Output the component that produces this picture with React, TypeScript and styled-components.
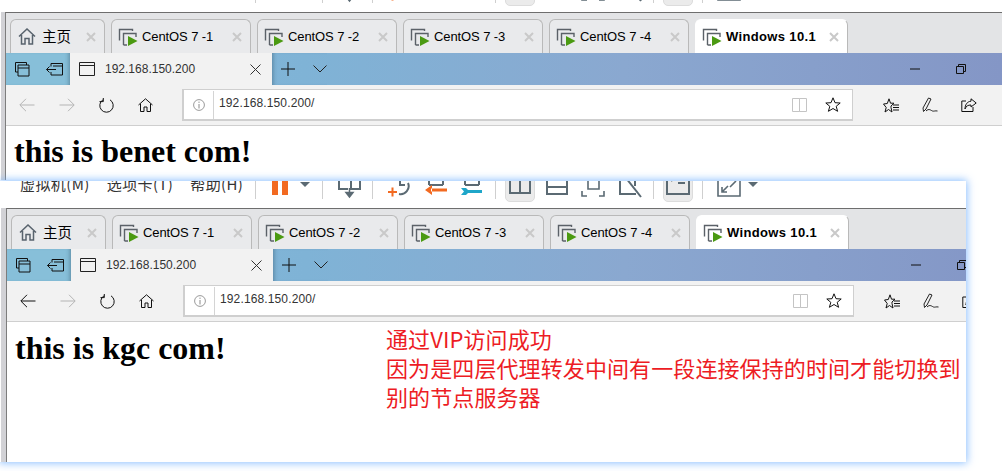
import React from "react";
import styled, { createGlobalStyle } from "styled-components";

const Global = createGlobalStyle`
  html, body { margin: 0; padding: 0; background: #fff; overflow: hidden; }
  body { width: 1002px; height: 471px; font-family: "Liberation Sans", "Noto Sans CJK SC", sans-serif; }
`;

const Page = styled.div`
  width: 1002px;
  height: 471px;
  overflow: hidden;
  display: flex;
  flex-direction: column;
`;

const Shot = styled.section<{ $width: number; $glow?: boolean }>`
  position: relative;
  z-index: ${(p) => (p.$glow ? 1 : 0)};
  width: ${(p) => p.$width}px;
  flex: none;
  background: #fff;
  box-shadow: ${(p) => (p.$glow ? "0 0 8px 1px rgba(110,175,255,.8)" : "none")};
  ${(p) => (p.$glow ? "margin-top: 1px;" : "")}
`;

const Clip = styled.div`
  overflow: hidden;
`;

const VmToolbar = styled.div<{ $height: number }>`
  height: ${(p) => p.$height}px;
  padding-left: 20px;
  display: flex;
  align-items: flex-end;
  overflow: hidden;
  background: #fff;
`;

const MenuGroup = styled.div`
  flex: none;
  width: 221px;
  display: flex;
  gap: 17px;
  align-items: flex-end;
`;

const Menu = styled.span`
  flex: none;
  margin-bottom: 14px;
  font: 15px/20px "Noto Sans CJK SC", sans-serif;
  letter-spacing: 0.4px;
  color: #333;
  white-space: nowrap;
`;

const Sep = styled.span<{ $ml: number }>`
  flex: none;
  width: 1px;
  height: 20px;
  margin-left: ${(p) => p.$ml}px;
  margin-bottom: 9px;
  background: #cfcfcf;
`;

const ToolIcon = styled.svg<{ $ml: number; $mb?: number }>`
  flex: none;
  display: block;
  margin-left: ${(p) => p.$ml}px;
  margin-bottom: ${(p) => p.$mb ?? 0}px;
`;

const ToolButton = styled.span<{ $ml: number }>`
  flex: none;
  box-sizing: border-box;
  width: 30px;
  height: 40px;
  margin-left: ${(p) => p.$ml}px;
  margin-bottom: 6px;
  background: #ebebeb;
  border: 1px solid #dcdcdc;
  border-radius: 0 0 5px 5px;
  display: flex;
  justify-content: center;
  align-items: flex-end;
`;

const Framed = styled.div<{ $gutter: number }>`
  display: flex;
  background: linear-gradient(90deg, #fff 1px, #d2d2d6 1px);
  padding-left: ${(p) => p.$gutter}px;
`;

const Inner = styled.div`
  width: 997px;
  flex: none;
  box-sizing: border-box;
  border-left: 1px solid #7d7d7d;
  border-top: 1px solid #6e6e6e;
  background: #fff;
`;

const TabStrip = styled.div`
  height: 40px;
  box-sizing: border-box;
  background: #e3e4e6;
  padding: 6px 0 0 4px;
  display: flex;
  gap: 6px;
`;

const VmTab = styled.div<{ $width: number; $active?: boolean }>`
  width: ${(p) => p.$width}px;
  height: 34px;
  box-sizing: border-box;
  padding: 0 8px 0 6px;
  display: flex;
  align-items: center;
  background: ${(p) => (p.$active ? "#fff" : "#e9eaec")};
  border: 1px solid ${(p) => (p.$active ? "#fff" : "#b9b9b9")};
  border-right-color: #b9b9b9;
  border-bottom: 0;
  border-radius: 6px 6px 0 0;
  flex: none;
`;

const TabLabel = styled.span<{ $active?: boolean; $cjk?: boolean }>`
  margin-left: ${(p) => (p.$cjk ? 6 : 4)}px;
  flex: 1;
  white-space: nowrap;
  color: #000;
  font: ${(p) => (p.$active ? "bold 13px" : "13px")} / 16px "Liberation Sans", "Noto Sans CJK SC", sans-serif;
  font-size: ${(p) => (p.$cjk ? "14.5px" : "13px")};
  letter-spacing: ${(p) => (p.$active ? "0.35px" : p.$cjk ? "0" : "-0.1px")};
`;

const BrowserBar = styled.div`
  height: 32px;
  display: flex;
  align-items: stretch;
  background: linear-gradient(90deg, #85bbd9 0%, #7fb3d6 30%, #8aa8d0 62%, #8496c6 100%);
`;

const SetTabs = styled.div`
  width: 64px;
  flex: none;
  display: flex;
  align-items: center;
  gap: 16px;
  padding-left: 9px;
  box-sizing: border-box;
  background: #87bfd9;
  box-shadow: inset -4px 0 4px -3px rgba(40, 70, 90, 0.45);
`;

const PageTab = styled.div`
  width: 202px;
  flex: none;
  box-sizing: border-box;
  display: flex;
  align-items: center;
  padding: 0 11px 0 9px;
  background: #f2f2f2;
`;

const PageTitle = styled.span`
  flex: 1;
  margin-left: 10px;
  font-size: 12px;
  color: #333;
  white-space: nowrap;
`;

const BarButtons = styled.div`
  flex: none;
  display: flex;
  align-items: center;
  gap: 18px;
  padding-left: 9px;
  box-shadow: inset 4px 0 4px -3px rgba(40, 70, 90, 0.45);
`;

const WindowButtons = styled.div`
  margin-left: auto;
  display: flex;
  align-items: center;
  gap: 36px;
  padding-right: 36px;
`;

const NavBar = styled.div`
  height: 41px;
  box-sizing: border-box;
  display: flex;
  align-items: center;
  background: #f2f2f2;
  border-bottom: 1px solid #cfcfcf;
  padding-left: 13px;
`;

const NavIcons = styled.div`
  display: flex;
  align-items: center;
  gap: 24px;
  flex: none;
  width: 163px;
`;

const Address = styled.div`
  width: 671px;
  height: 32px;
  box-sizing: border-box;
  flex: none;
  background: #fff;
  border: 1px solid #cfcfcf;
  border-bottom-width: 2px;
  border-left-width: 2px;
  display: flex;
  align-items: center;
  padding: 0 11px 0 9px;
`;

const AddressDivider = styled.span`
  width: 1px;
  height: 28px;
  background: #d4d4d4;
  margin: 0 5px 0 8px;
`;

const Url = styled.span`
  flex: 1;
  font-size: 12px;
  letter-spacing: 0.13px;
  color: #333;
  margin-top: -4px;
  white-space: nowrap;
`;

const AddressIcons = styled.div`
  display: flex;
  align-items: center;
  gap: 18px;
`;

const HubIcons = styled.div`
  display: flex;
  align-items: center;
  gap: 23px;
  margin-left: 30px;
  flex: none;
`;

const Content = styled.div<{ $height: number }>`
  height: ${(p) => p.$height}px;
  box-sizing: border-box;
  padding-left: 8px;
  display: grid;
  grid-template-columns: 371px 1fr;
  background: #fff;
`;

const Heading = styled.h1<{ $top: number }>`
  margin: ${(p) => p.$top}px 0 0;
  font: bold 32px/37px "Liberation Serif", "Times New Roman", serif;
  color: #000;
  white-space: nowrap;
`;

const Annotation = styled.p`
  margin: 2px 0 0;
  font: 22px/29px "Noto Sans CJK SC", "Liberation Sans", sans-serif;
  letter-spacing: 0.1px;
  color: #ed1c24;
  width: 585px;
`;

const s = { fill: "none", stroke: "#111", strokeWidth: 1 };

const VmIcon = () => (
  <svg width="20" height="18" viewBox="0 0 20 18" style={{ flex: "none" }}>
    <path d="M1.5 12.5V1.5H14.5V3" fill="none" stroke="#5b6168" strokeWidth="1.4" />
    <path d="M5.5 17V5.5H18V9M5.5 17H9" fill="none" stroke="#5b6168" strokeWidth="1.4" />
    <path d="M10 8L19.5 13L10 18Z" fill="#4b9a12" />
  </svg>
);

const HomeTabIcon = () => (
  <svg width="18" height="17" viewBox="0 0 18 17" style={{ flex: "none", marginLeft: 1 }}>
    <path d="M1 8.5L9 1L17 8.5M3.5 7V16H7V10.5H11V16H14.5V7" fill="none" stroke="#58636d" strokeWidth="1.5" />
  </svg>
);

const Close = () => (
  <svg width="10" height="10" viewBox="0 0 10 10" style={{ flex: "none" }}>
    <path d="M1 1L9 9M9 1L1 9" stroke="#c9c9c9" strokeWidth="2" />
  </svg>
);

const Tabs = () => (
  <TabStrip>
    <VmTab $width={95}>
      <HomeTabIcon />
      <TabLabel $cjk>主页</TabLabel>
      <Close />
    </VmTab>
    {["CentOS 7 -1", "CentOS 7 -2", "CentOS 7 -3", "CentOS 7 -4"].map((t) => (
      <VmTab key={t} $width={140}>
        <VmIcon />
        <TabLabel>{t}</TabLabel>
        <Close />
      </VmTab>
    ))}
    <VmTab $width={153} $active>
      <VmIcon />
      <TabLabel $active>Windows 10.1</TabLabel>
      <Close />
    </VmTab>
  </TabStrip>
);

const Browser = ({ canGoBack }: { canGoBack?: boolean }) => (
  <>
    <BrowserBar>
      <SetTabs>
        <svg width="15" height="15" viewBox="0 0 15 15">
          <path d="M.5.5H11.5V3M.5.5V10H3" {...s} />
          <path d="M3 3H14V14H3ZM3 6H14" fill="none" stroke="#111" />
        </svg>
        <svg width="17" height="13" viewBox="0 0 17 13">
          <path d="M5 .5H16.5V12H5V9M5 3.5V.5M7 3H16.5" {...s} />
          <path d="M.5 6.5H10M3.5 3.5L.5 6.5L3.5 9.5" {...s} />
        </svg>
      </SetTabs>
      <PageTab>
        <svg width="16" height="14" viewBox="0 0 16 14">
          <path d="M.5.5H15.5V13.5H.5ZM.5 3.5H15.5" fill="none" stroke="#222" />
        </svg>
        <PageTitle>192.168.150.200</PageTitle>
        <svg width="11" height="11" viewBox="0 0 11 11">
          <path d="M.5.5L10.5 10.5M10.5.5L.5 10.5" stroke="#333" />
        </svg>
      </PageTab>
      <BarButtons>
        <svg width="14" height="14" viewBox="0 0 14 14">
          <path d="M7 0V14M0 7H14" stroke="#111" />
        </svg>
        <svg width="14" height="8" viewBox="0 0 14 8">
          <path d="M.5.5L7 7L13.5.5" fill="none" stroke="#222" />
        </svg>
      </BarButtons>
      <WindowButtons>
        <svg width="10" height="2" viewBox="0 0 10 2">
          <path d="M0 1H10" stroke="#111" />
        </svg>
        <svg width="10" height="10" viewBox="0 0 10 10">
          <path d="M.5 2.5H7.5V9.5H.5ZM2.5 2.5V.5H9.5V7.5H7.5" fill="none" stroke="#111" />
        </svg>
      </WindowButtons>
    </BrowserBar>
    <NavBar>
      <NavIcons>
        <svg width="16" height="14" viewBox="0 0 16 14">
          <path d="M15.5 7H1M7 .8L.8 7L7 13.2" fill="none" stroke={canGoBack ? "#111" : "#b4b4b4"} />
        </svg>
        <svg width="16" height="14" viewBox="0 0 16 14">
          <path d="M.5 7H15M9 .8L15.2 7L9 13.2" fill="none" stroke="#b4b4b4" />
        </svg>
        <svg width="15" height="15" viewBox="0 0 15 15">
          <path d="M4 1.8A6.7 6.7 0 1 0 11 1.8" fill="none" stroke="#111" />
          <path d="M4.3 0V4H.5" fill="none" stroke="#111" transform="translate(0 -.4)" />
        </svg>
        <svg width="15" height="14" viewBox="0 0 15 14">
          <path d="M.5 7L7.5 .8L14.5 7M2.5 5.8V13.5H6V9H9V13.5H12.5V5.8" fill="none" stroke="#111" />
        </svg>
      </NavIcons>
      <Address>
        <svg width="12" height="12" viewBox="0 0 12 12" style={{ flex: "none" }}>
          <circle cx="6" cy="6" r="5.4" fill="none" stroke="#9a9a9a" />
          <path d="M6 5V9.5M6 2.6V3.9" stroke="#8a8a8a" />
        </svg>
        <AddressDivider />
        <Url>192.168.150.200/</Url>
        <AddressIcons>
          <svg width="15" height="14" viewBox="0 0 15 14">
            <path d="M.5.5H7.5V13.5H.5ZM7.5.5H14.5V13.5H7.5Z" fill="none" stroke="#c4c4c4" />
          </svg>
          <svg width="16" height="15" viewBox="0 0 16 15">
            <path d="M8 .8L10 5.7L15.2 6L11.2 9.3L12.6 14.3L8 11.5L3.4 14.3L4.8 9.3L.8 6L6 5.7Z" fill="none" stroke="#111" />
          </svg>
        </AddressIcons>
      </Address>
      <HubIcons>
        <svg width="16" height="15" viewBox="0 0 16 15">
          <path d="M6 .8L7.5 5.2H11L8 8V9.5L9 14L5.5 11.5L2 14L3.2 9.5L.5 6L4.3 5.5Z" fill="none" stroke="#111" />
          <path d="M10 7H16M10 9.5H16M10 12H16" stroke="#111" />
        </svg>
        <svg width="16" height="16" viewBox="0 0 16 16">
          <path d="M1.5 14.5L1 11L6.5 1L9 2L4 12ZM4 14C7 11 9 13.5 10.5 14C12 14.5 13 13.5 15.5 14" fill="none" stroke="#222" />
        </svg>
        <svg width="16" height="15" viewBox="0 0 16 15">
          <path d="M5 3H.8V13.5H12V9" fill="none" stroke="#111" />
          <path d="M10 .8L15.2 5L10 9V7C7 7 5 8 4 11C4 7 6 3.5 10 3.2Z" fill="none" stroke="#111" />
        </svg>
      </HubIcons>
    </NavBar>
  </>
);

const Chrome = ({ height, menus }: { height: number; menus?: boolean }) => {
  const g = "#5b6a73";
  return (
    <VmToolbar $height={height}>
      <MenuGroup>
        {menus && (
          <>
            <Menu>虚拟机(M)</Menu>
            <Menu>选项卡(T)</Menu>
            <Menu>帮助(H)</Menu>
          </>
        )}
      </MenuGroup>
      <Sep $ml={14} />
      <ToolIcon $ml={16} width="16" height="40" viewBox="0 0 16 40">
        <path d="M0 10H6V27H0ZM10 10H16V27H10Z" fill="#f26a21" />
      </ToolIcon>
      <ToolIcon $ml={12} width="10" height="40" viewBox="0 0 10 40">
        <path d="M0 14H10L5 19Z" fill={g} />
      </ToolIcon>
      <Sep $ml={12} />
      <ToolIcon $ml={15} width="23" height="40" viewBox="0 0 23 40">
        <path d="M1 10V21H10M13 10V21H22V10" fill="none" stroke={g} strokeWidth="2" />
        <path d="M11.5 20V26M8 24.5L11.5 29L15 24.5Z" fill={g} stroke={g} strokeWidth="1.5" />
      </ToolIcon>
      <Sep $ml={11} />
      <ToolIcon $ml={15} width="22" height="40" viewBox="0 0 22 40">
        <path d="M12 11V17H17M20 15A8 8 0 0 1 11 26" fill="none" stroke={g} strokeWidth="2" />
        <path d="M0 24H9M4.5 19.5V28.5" stroke="#f26a21" strokeWidth="2" />
      </ToolIcon>
      <ToolIcon $ml={15} width="22" height="40" viewBox="0 0 22 40">
        <path d="M4 17V11M18 17V11M4 17H18" fill="none" stroke={g} strokeWidth="2" />
        <path d="M6 20.5H22V23.5H6ZM7 17L0 22L7 27Z" fill="#f26a21" />
      </ToolIcon>
      <ToolIcon $ml={14} width="22" height="40" viewBox="0 0 22 40">
        <path d="M4 17V11M18 17V11M4 17H18" fill="none" stroke={g} strokeWidth="2" />
        <path d="M0 20H5L7 22H21V25H7L5 27H0L3 23.5Z" fill="#1fa6c9" />
      </ToolIcon>
      <Sep $ml={12} />
      <ToolButton $ml={9}>
        <ToolIcon $ml={0} $mb={7} width="22" height="27" viewBox="0 0 22 27">
          <path d="M1 0V26H21V0M11 0V26" fill="none" stroke={g} strokeWidth="2" />
        </ToolIcon>
      </ToolButton>
      <ToolIcon $ml={11} width="22" height="40" viewBox="0 0 22 40">
        <path d="M1 10V26H21V10M1 19H21" fill="none" stroke={g} strokeWidth="2" />
      </ToolIcon>
      <ToolIcon $ml={13} width="24" height="40" viewBox="0 0 24 40">
        <path d="M7 10V21H18V10M1 23V28H6M18 28H23V23" fill="none" stroke={g} strokeWidth="1.6" />
      </ToolIcon>
      <ToolIcon $ml={13} width="24" height="40" viewBox="0 0 24 40">
        <path d="M2 10V26H18M17 10V18" fill="none" stroke={g} strokeWidth="2" />
        <path d="M8 10L23 29" stroke={g} strokeWidth="2" />
      </ToolIcon>
      <Sep $ml={11} />
      <ToolButton $ml={9}>
        <ToolIcon $ml={0} $mb={6} width="24" height="27" viewBox="0 0 24 27">
          <path d="M1 0V26H23V0" fill="none" stroke={g} strokeWidth="2" />
          <path d="M5 5L10 9L5 13M12 15H19" fill="none" stroke={g} strokeWidth="2" />
        </ToolIcon>
      </ToolButton>
      <Sep $ml={9} />
      <ToolIcon $ml={14} width="24" height="40" viewBox="0 0 24 40">
        <path d="M1 11V28H23V11M5 24L11 18M5 19V24H10M19 13L13 19" fill="none" stroke={g} strokeWidth="1.6" />
      </ToolIcon>
      <ToolIcon $ml={7} width="10" height="40" viewBox="0 0 10 40">
        <path d="M0 14H10L5 19Z" fill={g} />
      </ToolIcon>
    </VmToolbar>
  );
};

export default function App() {
  return (
    <Page>
      <Global />
      <Shot $width={1002}>
        <Chrome height={12} />
        <Framed $gutter={5}>
          <Inner>
            <Tabs />
            <Browser />
            <Content $height={54}>
              <Heading $top={7}>this is benet com!</Heading>
            </Content>
          </Inner>
        </Framed>
      </Shot>
      <Shot $width={966} $glow>
        <Clip>
          <Chrome height={27} menus />
          <Framed $gutter={6}>
            <Inner>
              <Tabs />
              <Browser canGoBack />
              <Content $height={140}>
                <Heading $top={8}>this is kgc com!</Heading>
                <Annotation>
                  通过VIP访问成功
                  <br />
                  因为是四层代理转发中间有一段连接保持的时间才能切换到
                  <br />
                  别的节点服务器
                </Annotation>
              </Content>
            </Inner>
          </Framed>
        </Clip>
      </Shot>
    </Page>
  );
}
